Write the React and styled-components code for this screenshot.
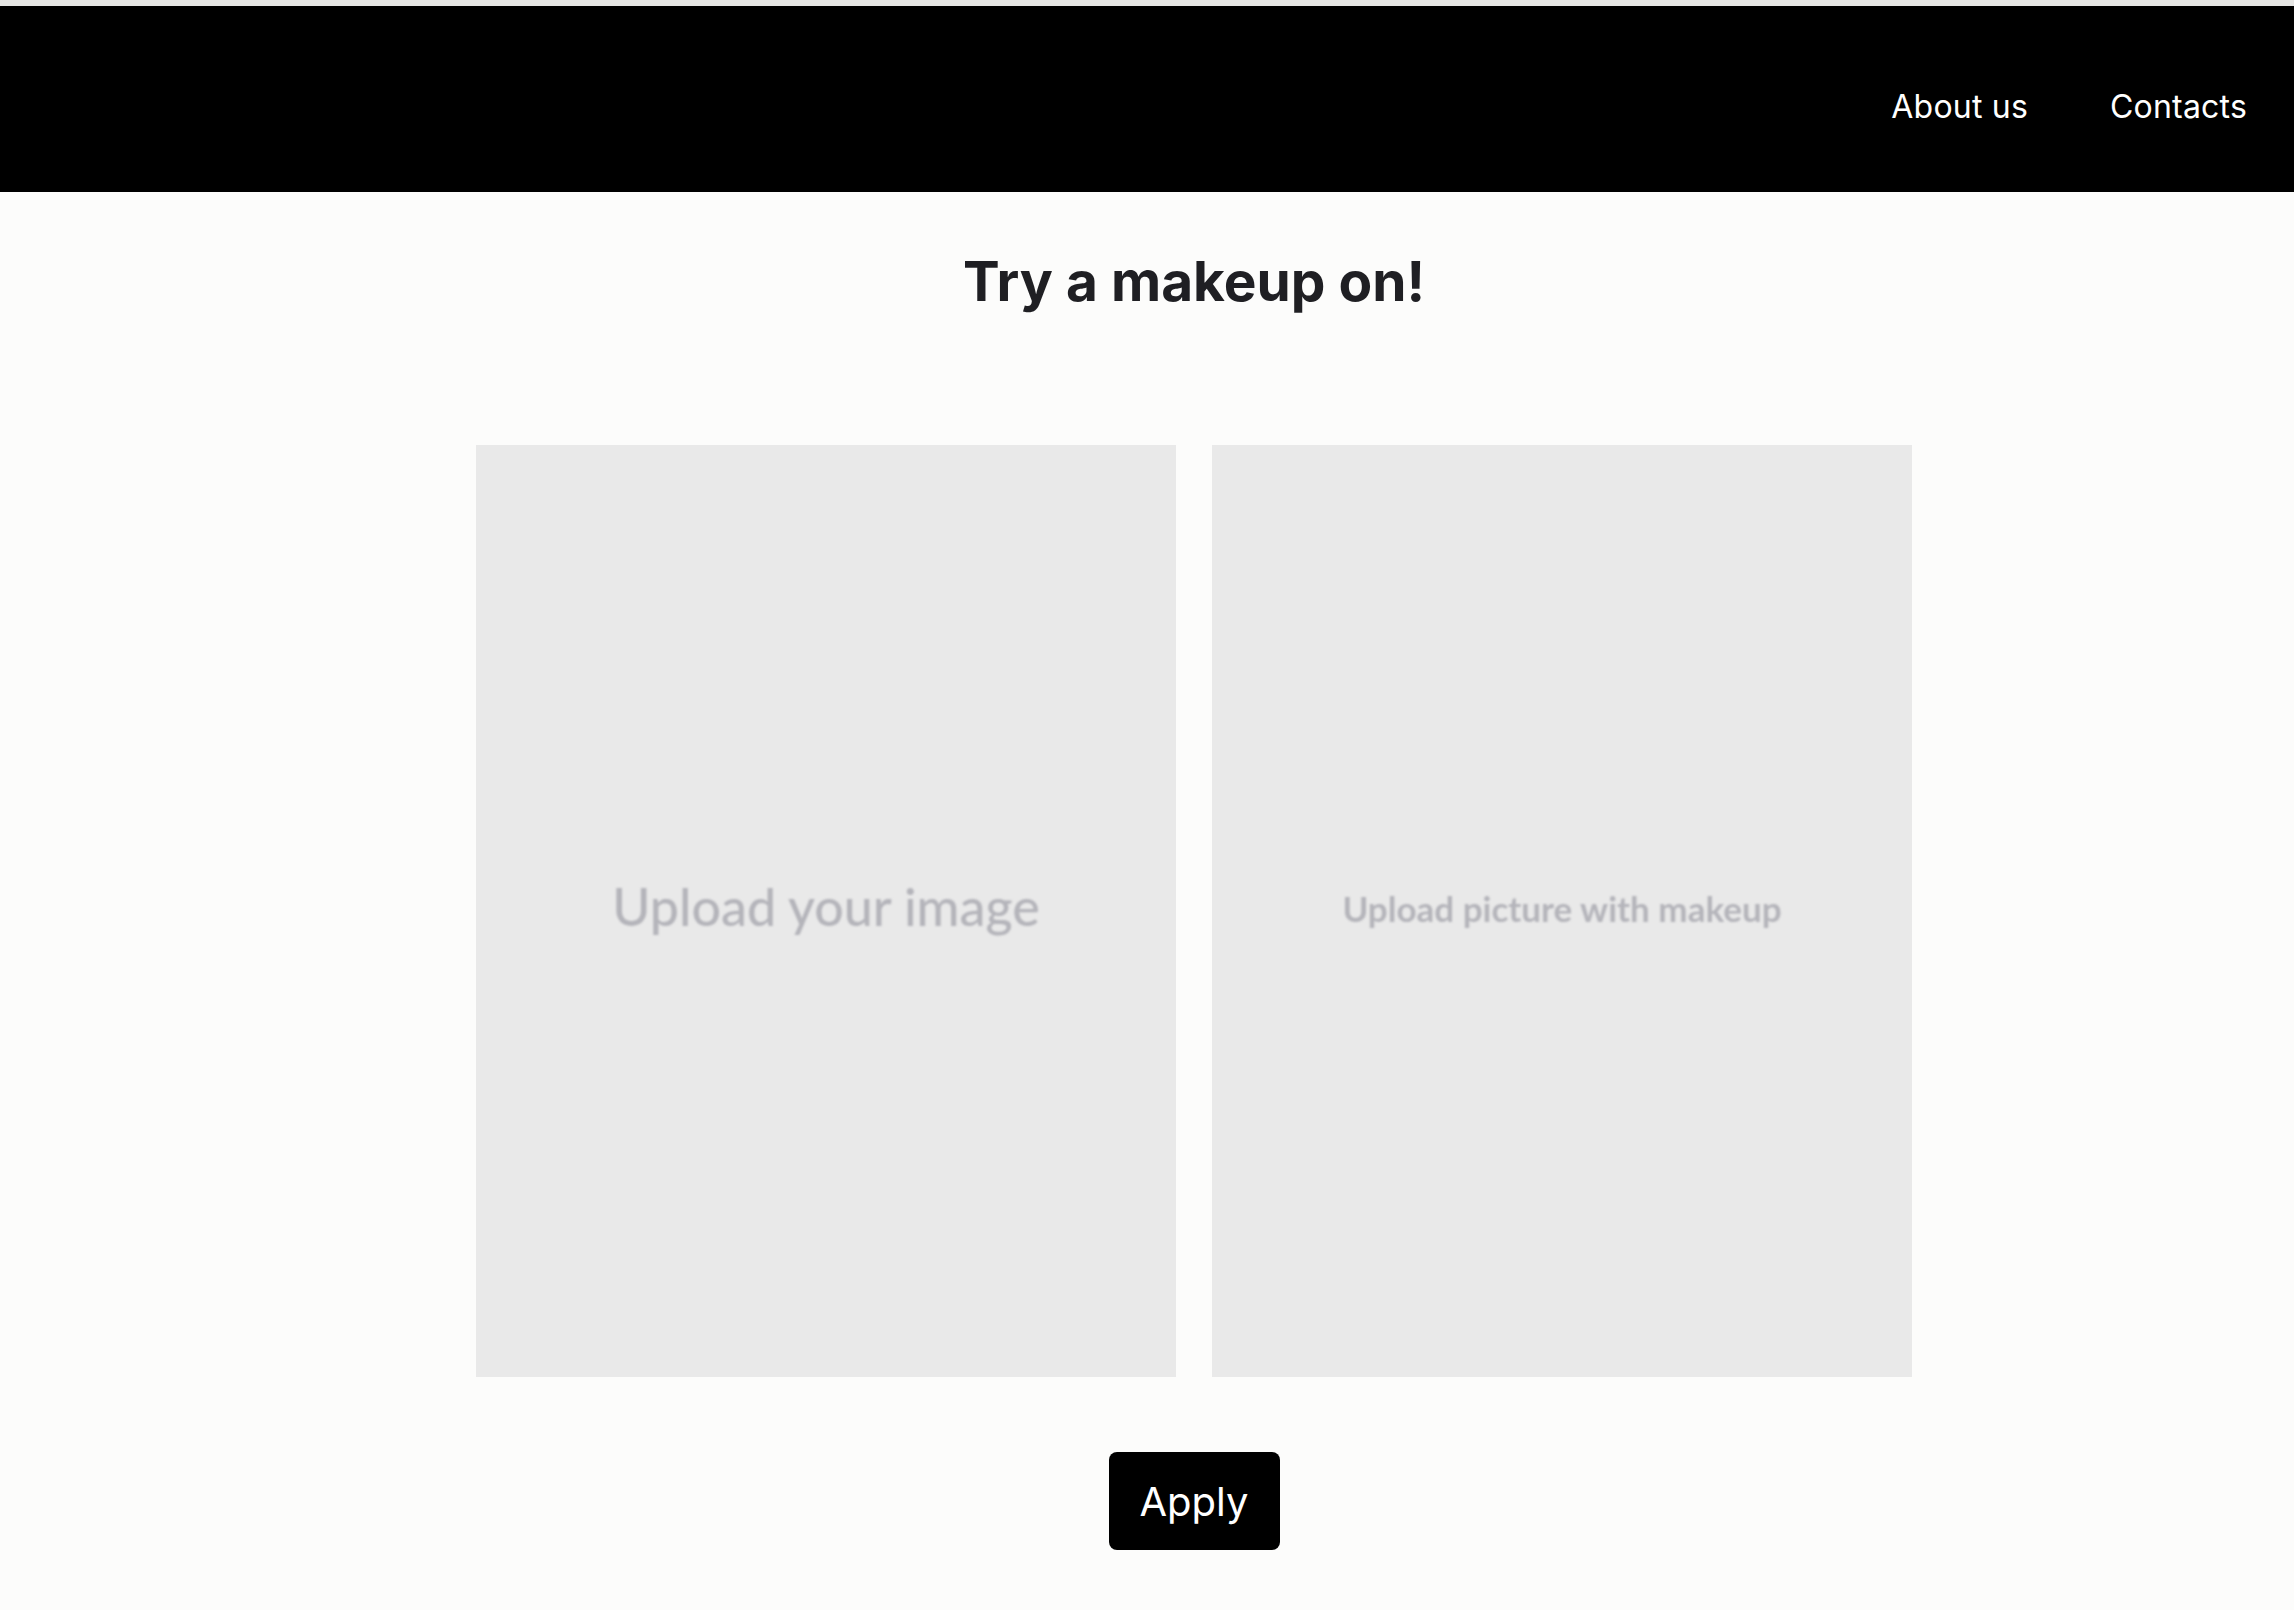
import React from "react";
import styled, { createGlobalStyle } from "styled-components";

const GlobalStyle = createGlobalStyle`
  html, body {
    margin: 0;
    padding: 0;
    background: #fcfcfb;
  }
  body {
    border-top: 6px solid #e6e6e4;
    font-family: Inter, "Liberation Sans", sans-serif;
  }
`;

// Top bar
const NavBar = styled.header`
  height: 186px;
  background: #000;
  display: flex;
  justify-content: flex-end;
  align-items: flex-start;
  padding: 81px 47px 0 0;
  box-sizing: border-box;
  gap: 82px;
`;

const NavLink = styled.a`
  color: #fff;
  font-size: 32px;
  font-weight: 400;
  line-height: 40px;
  letter-spacing: 0.2px;
  text-decoration: none;
  cursor: pointer;
`;

const Main = styled.main`
  display: flex;
  flex-direction: column;
  align-items: center;
  padding: 0 0 40px 94px;
`;

const Title = styled.h1`
  margin: 61px 0 0;
  font-size: 55px;
  line-height: 56px;
  font-weight: 700;
  color: #1f1f23;
`;

const Uploads = styled.div`
  display: flex;
  gap: 36px;
  margin-top: 136px;
`;

const DropZone = styled.div`
  width: 700px;
  height: 932px;
  background: #e9e9e9;
  display: flex;
  align-items: center;
  justify-content: center;
  cursor: pointer;
`;

const DropLabel = styled.span`
  font-family: Lato, "Open Sans", sans-serif;
  font-size: ${(p) => (p.$small ? "35px" : "52px")};
  font-weight: ${(p) => (p.$small ? 700 : 500)};
  color: #b4b4ba;
  filter: blur(1px);
  margin-top: ${(p) => (p.$small ? "-6px" : "-10px")};
`;

const ApplyButton = styled.button`
  margin-top: 75px;
  width: 171px;
  height: 98px;
  background: #000;
  color: #fff;
  border: none;
  border-radius: 8px;
  font-family: Inter, "Liberation Sans", sans-serif;
  font-size: 40px;
  font-weight: 400;
  cursor: pointer;
`;

export default function App() {
  return (
    <>
      <GlobalStyle />
      <NavBar>
        <NavLink>About us</NavLink>
        <NavLink>Contacts</NavLink>
      </NavBar>
      <Main>
        <Title>Try a makeup on!</Title>
        <Uploads>
          <DropZone>
            <DropLabel>Upload your image</DropLabel>
          </DropZone>
          <DropZone>
            <DropLabel $small>Upload picture with makeup</DropLabel>
          </DropZone>
        </Uploads>
        <ApplyButton>Apply</ApplyButton>
      </Main>
    </>
  );
}
